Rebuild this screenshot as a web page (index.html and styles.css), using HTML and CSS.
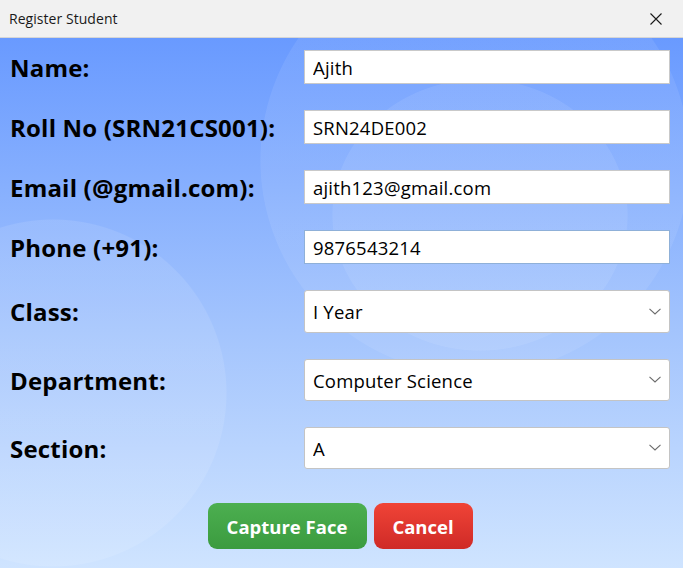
FILE: index.html
```html
<!DOCTYPE html>
<html lang="en">
<head>
<meta charset="utf-8">
<title>Register Student</title>
<link rel="stylesheet" href="styles.css">
</head>
<body>
<div class="window">
  <header class="titlebar">
    <span class="title">Register Student</span>
    <span class="close" aria-label="Close">
      <svg width="12" height="12" viewBox="0 0 12 12"><path d="M0.5 0.5 L11.5 11.5 M11.5 0.5 L0.5 11.5" stroke="#1a1a1a" stroke-width="1.1" fill="none"/></svg>
    </span>
  </header>
  <main class="content">
    <form class="form">
      <label class="label" for="name">Name:</label>
      <input class="field text" id="name" value="Ajith">

      <label class="label" for="roll">Roll No (SRN21CS001):</label>
      <input class="field text" id="roll" value="SRN24DE002">

      <label class="label" for="email">Email (@gmail.com):</label>
      <input class="field text" id="email" value="ajith123@gmail.com">

      <label class="label" for="phone">Phone (+91):</label>
      <input class="field text focused" id="phone" value="9876543214">

      <label class="label" for="class">Class:</label>
      <div class="select-wrap">
        <select class="field select" id="class"><option>I Year</option></select>
        <svg class="chevron" width="12" height="7" viewBox="0 0 12 7"><path d="M0.5 0.8 L6 6 L11.5 0.8" stroke="#6b6b6b" stroke-width="1.1" fill="none"/></svg>
      </div>

      <label class="label" for="dept">Department:</label>
      <div class="select-wrap">
        <select class="field select" id="dept"><option>Computer Science</option></select>
        <svg class="chevron" width="12" height="7" viewBox="0 0 12 7"><path d="M0.5 0.8 L6 6 L11.5 0.8" stroke="#6b6b6b" stroke-width="1.1" fill="none"/></svg>
      </div>

      <label class="label" for="section">Section:</label>
      <div class="select-wrap">
        <select class="field select" id="section"><option>A</option></select>
        <svg class="chevron" width="12" height="7" viewBox="0 0 12 7"><path d="M0.5 0.8 L6 6 L11.5 0.8" stroke="#6b6b6b" stroke-width="1.1" fill="none"/></svg>
      </div>
    </form>
    <div class="actions">
      <button class="btn capture" type="button">Capture Face</button>
      <button class="btn cancel" type="button">Cancel</button>
    </div>
  </main>
</div>
</body>
</html>
```
FILE: styles.css
```css
html, body {
  margin: 0;
  padding: 0;
  height: 100%;
}
body {
  font-family: "Open Sans", "Noto Sans", "Liberation Sans", sans-serif;
  background: #ffffff;
}
.window {
  display: flex;
  flex-direction: column;
  height: 568px;
  width: 683px;
  overflow: hidden;
}
.titlebar {
  box-sizing: border-box;
  height: 38px;
  flex: 0 0 38px;
  background: #f1f1f1;
  border-bottom: 1px solid #d6d6d6;
  display: flex;
  align-items: center;
  justify-content: space-between;
  padding: 0 21px 0 9px;
}
.title {
  font-size: 14px;
  color: #1a1a1a;
  letter-spacing: 0.05px;
}
.close {
  display: flex;
  align-items: center;
}
.content {
  flex: 1;
  background:
    radial-gradient(circle 174px at 53px 355px, rgba(255,255,255,0.10) 99.4%, rgba(255,255,255,0) 100%),
    radial-gradient(ellipse 148px 136px at 480px 177px, rgba(255,255,255,0.08) 99.4%, rgba(255,255,255,0) 100%),
    radial-gradient(circle 215px at 475px 122px, rgba(255,255,255,0.08) 99.6%, rgba(255,255,255,0) 100%),
    linear-gradient(180deg, #699aff 0%, #a3c4fd 55%, #cfe4ff 100%);
  display: flex;
  flex-direction: column;
}
.form {
  display: grid;
  grid-template-columns: 294px 366px;
  row-gap: 26px;
  padding: 12px 0 0 10px;
  align-items: center;
}
.label {
  font-weight: 700;
  font-size: 24px;
  color: #000;
  letter-spacing: 0.2px;
  line-height: 1;
  padding-top: 1px;
  white-space: nowrap;
}
.field {
  box-sizing: border-box;
  width: 366px;
  font-family: inherit;
  font-size: 18.5px;
  letter-spacing: 0.2px;
  color: #000;
  background: #fff;
  margin: 0;
  outline: none;
}
.text {
  height: 34px;
  border: 1px solid #c9c9c9;
  border-radius: 0;
  padding: 0 8px;
}
.text.focused {
  border: 1px solid #8fb0d8;
}
.select-wrap {
  position: relative;
  width: 366px;
}
.select {
  appearance: none;
  -webkit-appearance: none;
  height: 43px;
  border: 1px solid #c4c4c4;
  border-radius: 3px;
  padding: 0 8px;
  display: block;
}
#dept, #section {
  height: 42px;
}
.chevron {
  position: absolute;
  right: 9px;
  top: 50%;
  margin-top: -4px;
  pointer-events: none;
}
.actions {
  display: flex;
  justify-content: center;
  gap: 7px;
  padding: 34px 0 0 0;
  margin-left: -3px;
}
.btn {
  height: 46px;
  border: none;
  border-radius: 9px;
  color: #fff;
  font-family: inherit;
  font-weight: 700;
  font-size: 18.5px;
  padding-top: 2px;
  cursor: pointer;
}
.capture {
  width: 159px;
  background: linear-gradient(180deg, #4caf50, #3b9b3f);
}
.cancel {
  width: 99px;
  background: linear-gradient(180deg, #f04437, #cf2a27);
}
```
